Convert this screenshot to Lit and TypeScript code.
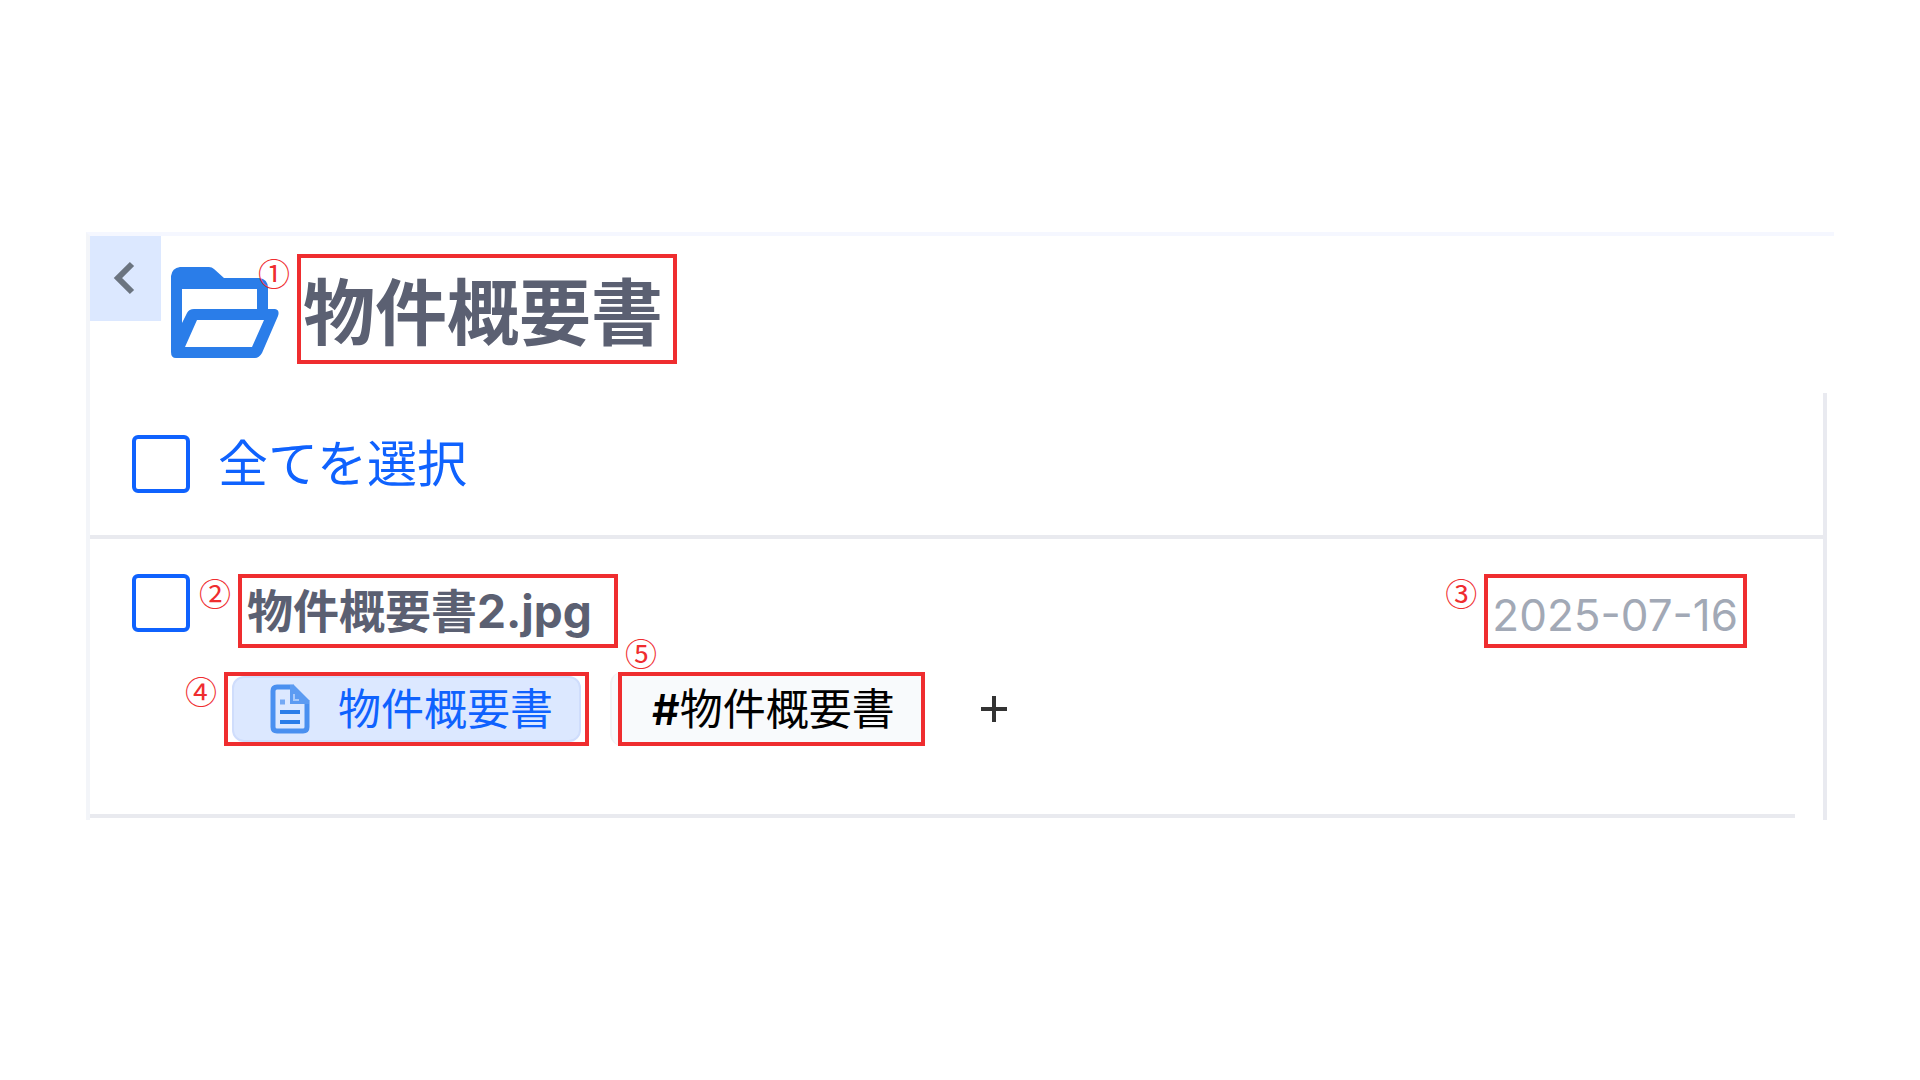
import { LitElement, html, css } from "lit";
import { customElement, property, state } from "lit/decorators.js";

interface FileEntry {
  id: string;
  name: string;
  date: string;
  category: string;
  tags: string[];
}

const FILES: FileEntry[] = [
  {
    id: "file-1",
    name: "物件概要書2.jpg",
    date: "2025-07-16",
    category: "物件概要書",
    tags: ["物件概要書"],
  },
];

/** Numbered red frame that calls out one part of the panel. */
@customElement("callout-frame")
export class CalloutFrame extends LitElement {
  static styles = css`
    :host {
      display: block;
      position: relative;
      box-sizing: border-box;
      border: 4px solid #ef2d2f;
    }
    .badge {
      position: absolute;
      top: 0;
      right: 100%;
      margin-right: 11px;
      font: 400 32px/28px "Noto Sans CJK JP", sans-serif;
      color: #ef2d2f;
    }
    :host([place="above"]) .badge {
      top: auto;
      bottom: 100%;
      right: auto;
      left: 3px;
      margin-right: 0;
      margin-bottom: 10px;
    }
  `;
  @property() label = "";
  @property({ reflect: true }) place = "side";

  render() {
    return html`<slot></slot><span class="badge">${this.label}</span>`;
  }
}

@customElement("app-root")
export class AppRoot extends LitElement {
  static styles = css`
    :host {
      display: block;
      box-sizing: border-box;
      min-height: 100vh;
      padding: 232px 86px 0;
      background: #fff;
      font-family: Inter, "Noto Sans CJK JP", sans-serif;
      color: #5b6072;
    }
    * {
      box-sizing: border-box;
    }
    button {
      display: flex;
      align-items: center;
      justify-content: center;
      margin: 0;
      border: 0;
      background: none;
      font: inherit;
      cursor: pointer;
    }
    svg {
      display: block;
    }
    .panel {
      border-top: 4px solid #f5f7ff;
      border-left: 4px solid #f3f5f9;
    }
    .header {
      display: flex;
      align-items: flex-start;
      min-height: 157px;
    }
    .back {
      width: 71px;
      height: 85px;
      padding: 0 4px 2px 0;
      background: #dce8ff;
    }
    .folder {
      margin: 29px 18px 0 10px;
    }
    .title-frame {
      margin-top: 18px;
      padding: 8px 10px 0 2px;
    }
    .title {
      margin: 0;
      font-size: 72px;
      line-height: 94px;
      font-weight: 700;
    }
    .list {
      margin-right: 7px;
      padding-bottom: 2px;
      border-right: 4px solid #e9eaf0;
    }
    .select-all {
      display: flex;
      align-items: center;
      gap: 28px;
      height: 146px;
      padding-left: 42px;
      border-bottom: 4px solid #e9eaef;
      color: #0f62fe;
      font-size: 50px;
      line-height: 64px;
    }
    .check {
      appearance: none;
      flex: none;
      width: 58px;
      height: 58px;
      margin: 0;
      border: 4px solid #0f62fe;
      border-radius: 6px;
      background: #fff;
    }
    .check:checked {
      background: #0f62fe;
    }
    .files {
      list-style: none;
      margin: 0 28px 0 0;
      padding: 0;
    }
    .file {
      padding: 35px 48px 68px 42px;
      border-bottom: 4px solid #e9eaef;
    }
    .file-head {
      display: flex;
      align-items: flex-start;
      gap: 48px;
    }
    .name-frame {
      padding: 0 22px 0 5px;
    }
    .name {
      display: block;
      font-size: 46px;
      line-height: 66px;
      font-weight: 700;
    }
    .date-frame {
      margin-left: auto;
      padding: 8px 5px 0 4px;
    }
    .date {
      display: block;
      font-size: 44px;
      line-height: 58px;
      color: #a2a9b6;
    }
    .tags {
      display: flex;
      align-items: center;
      margin: 24px 0 0 92px;
    }
    .category-frame {
      padding: 0 4px;
    }
    .chip {
      display: flex;
      align-items: center;
      height: 66px;
      border-radius: 12px;
      font-size: 43px;
      line-height: 60px;
    }
    .category {
      gap: 28px;
      padding: 0 26px 0 36px;
      border: 2px solid #cfddfc;
      background: #dce8ff;
      color: #0f62fe;
    }
    .tag-wrap {
      margin-left: 21px;
      padding-left: 6px;
      border-left: 2px solid #f1f3f5;
      border-radius: 12px;
      background: #f8fafc;
    }
    .tag-frame {
      padding: 0 26px 0 30px;
    }
    .tag {
      color: #000;
    }
    .hash {
      font-weight: 600;
    }
    .add {
      width: 66px;
      height: 66px;
      margin-left: 36px;
      padding: 0;
    }
  `;

  @state() private selected = new Set<string>();

  private toggleAll(e: Event) {
    const on = (e.target as HTMLInputElement).checked;
    this.selected = new Set(on ? FILES.map((f) => f.id) : []);
  }

  private toggle(id: string) {
    const next = new Set(this.selected);
    next.has(id) ? next.delete(id) : next.add(id);
    this.selected = next;
  }

  private renderFile(f: FileEntry) {
    return html`
      <li class="file">
        <div class="file-head">
          <input
            class="check"
            type="checkbox"
            id=${f.id}
            .checked=${this.selected.has(f.id)}
            @change=${() => this.toggle(f.id)}
          />
          <callout-frame class="name-frame" label="②">
            <label class="name" for=${f.id}>${f.name}</label>
          </callout-frame>
          <callout-frame class="date-frame" label="③">
            <time class="date" datetime=${f.date}>${f.date}</time>
          </callout-frame>
        </div>
        <div class="tags">
          <callout-frame class="category-frame" label="④">
            <button class="chip category" type="button">
              <svg width="40" height="50" viewBox="0 0 40 50" fill="none">
                <path
                  d="M24 3H7Q3 3 3 7V43Q3 47 7 47H33Q37 47 37 43V16"
                  stroke="#4a90f0"
                  stroke-width="5"
                />
                <path d="M20 1H24L39 16V20H20Z" fill="#5c9bf2" />
                <path d="M24 10V16H29" stroke="#a9c9fa" stroke-width="2" />
                <path d="M10 18H15" stroke="#74a9f5" stroke-width="5" />
                <path
                  d="M10 28H30M10 38H30"
                  stroke="#2a7de9"
                  stroke-width="4"
                />
              </svg>
              ${f.category}
            </button>
          </callout-frame>
          ${f.tags.map(
            (t) => html`
              <div class="tag-wrap">
                <callout-frame class="tag-frame" label="⑤" place="above">
                  <span class="chip tag"><span class="hash">#</span>${t}</span>
                </callout-frame>
              </div>
            `,
          )}
          <button class="add" type="button" aria-label="タグを追加">
            <svg width="26" height="26" viewBox="0 0 26 26">
              <path d="M13 0V26M0 13H26" stroke="#333" stroke-width="4" />
            </svg>
          </button>
        </div>
      </li>
    `;
  }

  render() {
    return html`
      <main class="panel">
        <header class="header">
          <button class="back" type="button" aria-label="戻る">
            <svg width="24" height="36" viewBox="0 0 24 36" fill="none">
              <path
                d="M20 4L6 18L20 32"
                stroke="#6b7480"
                stroke-width="6"
              />
            </svg>
          </button>
          <svg
            class="folder"
            width="108"
            height="94"
            viewBox="0 0 108 94"
            fill="#2a7de9"
          >
            <path
              fill-rule="evenodd"
              d="M9 2H38Q41 2 43 4L53 13H88Q97 14 97 23V44H104Q109 45 107 51L91 88Q88 93 84 93H5Q0 93 0 87V11Q1 3 9 2ZM11 24V58L16 48Q18 44 23 44H86V24ZM26 55L14 82H81L93 55Z"
            />
          </svg>
          <callout-frame class="title-frame" label="①">
            <h1 class="title">物件概要書</h1>
          </callout-frame>
        </header>
        <section class="list">
          <div class="select-all">
            <input
              class="check"
              type="checkbox"
              id="select-all"
              .checked=${this.selected.size === FILES.length}
              @change=${this.toggleAll}
            />
            <label for="select-all">全てを選択</label>
          </div>
          <ul class="files">
            ${FILES.map((f) => this.renderFile(f))}
          </ul>
        </section>
      </main>
    `;
  }
}
